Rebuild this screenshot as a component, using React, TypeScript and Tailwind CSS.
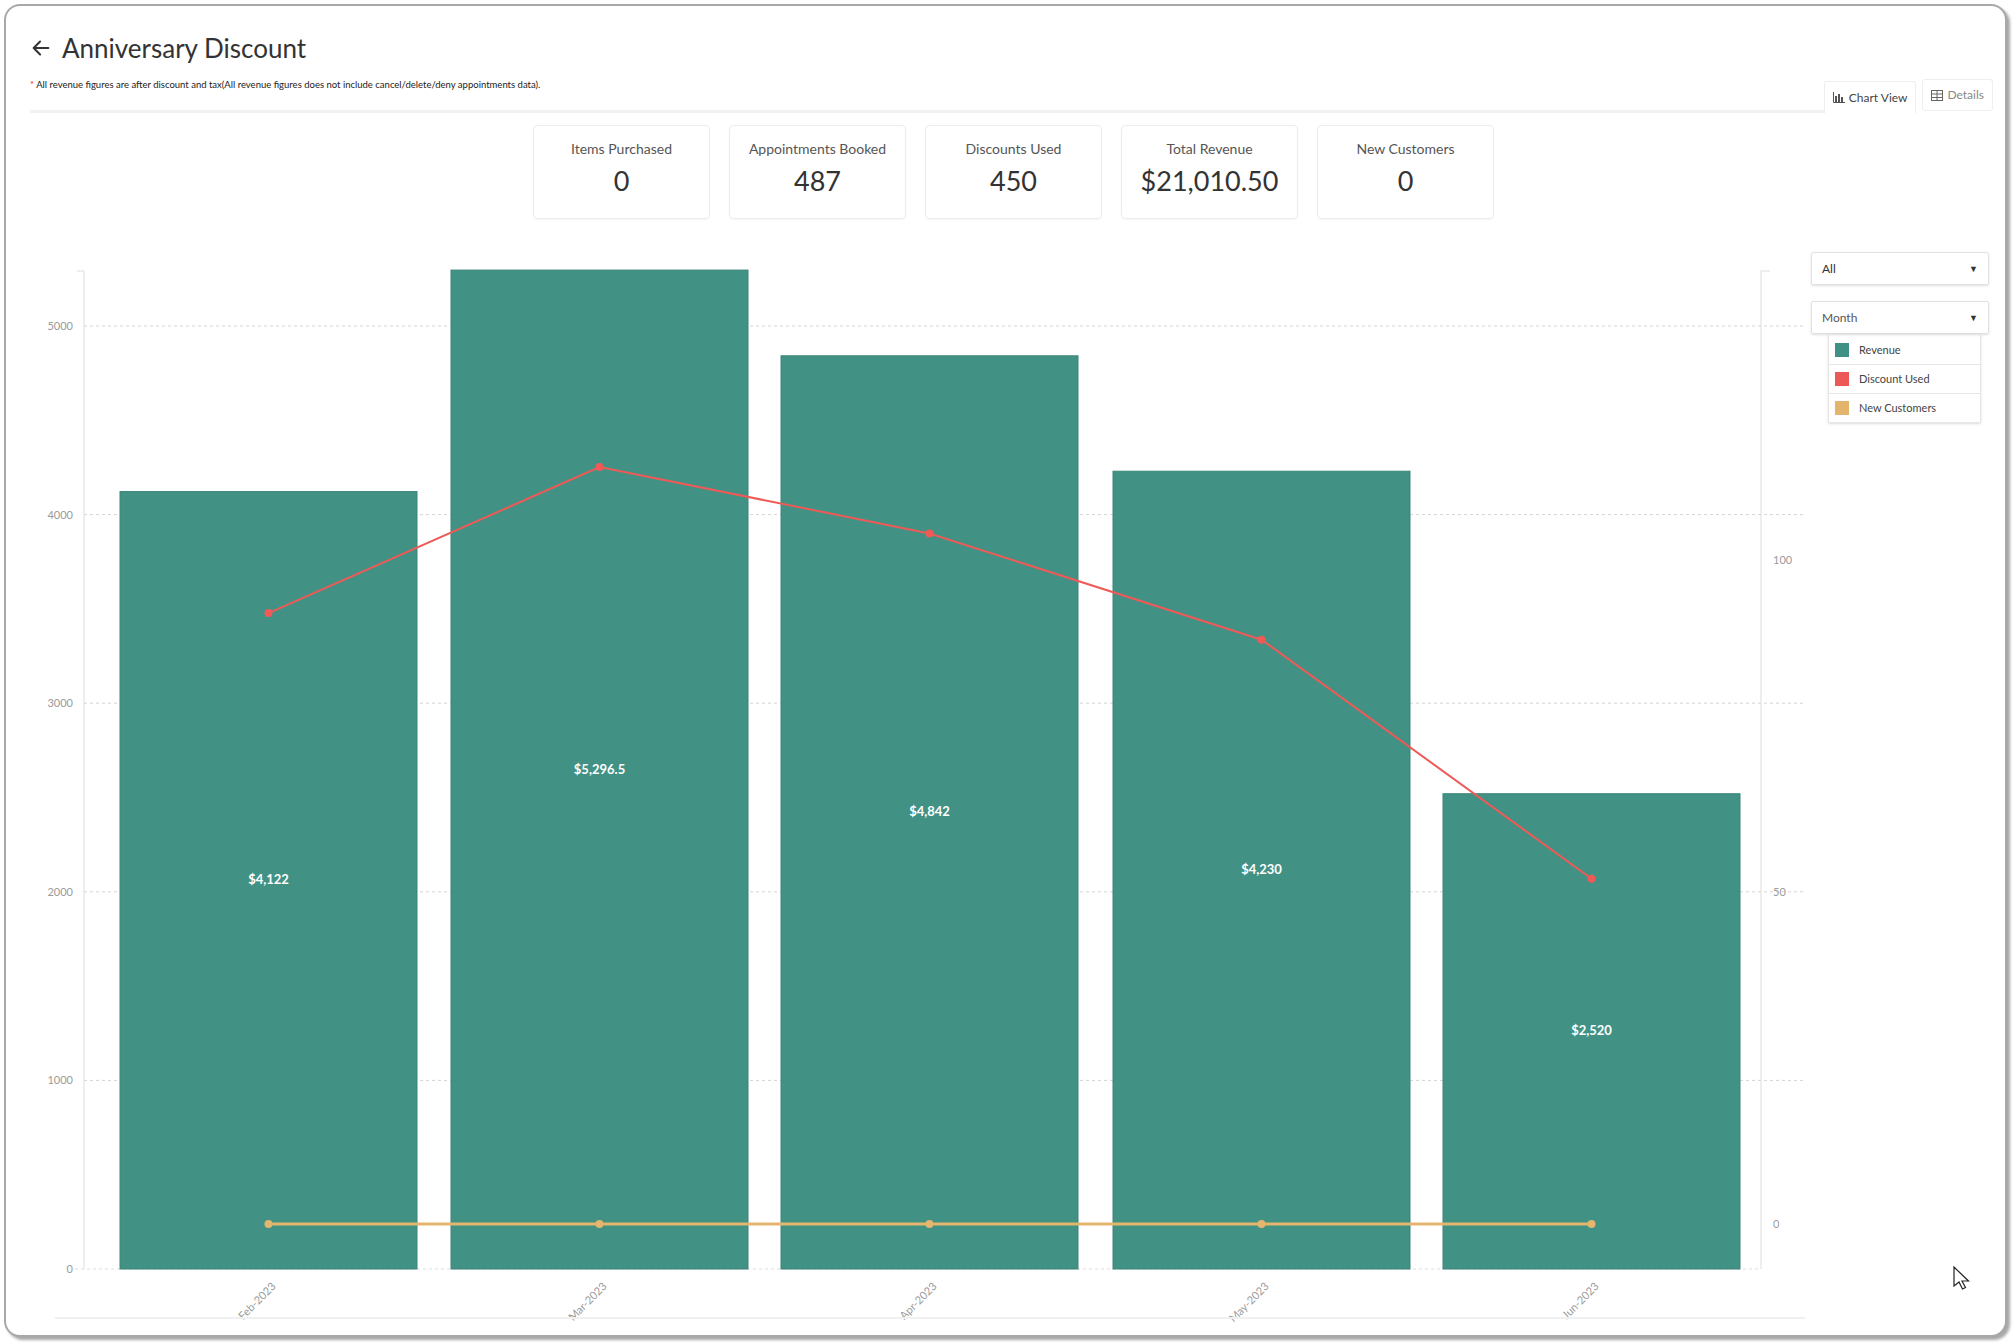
import React from "react";

const bars = [
  { m: "Feb-2023", v: 4122, label: "$4,122", x: 125, d: 92 },
  { m: "Mar-2023", v: 5296.5, label: "$5,296.5", x: 456, d: 114 },
  { m: "Apr-2023", v: 4842, label: "$4,842", x: 786, d: 104 },
  { m: "May-2023", v: 4230, label: "$4,230", x: 1118, d: 88 },
  { m: "Jun-2023", v: 2520, label: "$2,520", x: 1448, d: 52 },
];
const W = 297;
const yL = (v: number) => 1268 - (v / 1000) * 188.6;
const yR = (v: number) => 1223 - v * 6.64;

function Chart() {
  const pts = bars.map((b) => `${b.x + W / 2},${yR(b.d)}`).join(" ");
  return (
    <svg width={1805} height={1090} viewBox="5 240 1805 1090" className="block" style={{ fontFamily: "Lato, sans-serif" }}>
      {[1000, 2000, 3000, 4000, 5000].map((t) => (
        <line key={t} x1={89} x2={1808} y1={yL(t)} y2={yL(t)} stroke="#d4d4d4" strokeDasharray="3 3" />
      ))}
      {[0, 1000, 2000, 3000, 4000, 5000].map((t) => (
        <text key={t} x={78} y={yL(t) + 4} fontSize={11} fill="#9a9a9a" textAnchor="end">{t}</text>
      ))}
      {[[0, "0"], [50, "50"], [100, "100"]].map(([v, s]) => (
        <text key={s as string} x={1778} y={yR(v as number) + 4} fontSize={11} fill="#9a9a9a">{s}</text>
      ))}
      <line x1={89} x2={89} y1={270} y2={1268} stroke="#ddd" />
      <line x1={82} x2={89} y1={270} y2={270} stroke="#ddd" />
      <line x1={1766} x2={1766} y1={270} y2={1268} stroke="#ddd" />
      <line x1={1766} x2={1775} y1={270} y2={270} stroke="#ddd" />
      <line x1={80} x2={1766} y1={1268} y2={1268} stroke="#ddd" strokeDasharray="3 3" />
      {bars.map((b) => (
        <g key={b.m}>
          <rect x={b.x} y={yL(b.v)} width={W} height={1268 - yL(b.v)} fill="#419285" stroke="#3a8578" />
          <text x={b.x + W / 2} y={(yL(b.v) + 1268) / 2 + 4} fontSize={13} fontWeight={700} fill="#fff" textAnchor="middle">{b.label}</text>
          <text transform={`translate(${b.x + W / 2 + 8},${1286}) rotate(-45)`} fontSize={11} fill="#9a9a9a" textAnchor="end">{b.m}</text>
        </g>
      ))}
      <polyline points={pts} fill="none" stroke="#ef5a57" strokeWidth={2} />
      {bars.map((b) => <circle key={b.m} cx={b.x + W / 2} cy={yR(b.d)} r={4} fill="#ef5a57" />)}
      <line x1={bars[0].x + W / 2} x2={bars[4].x + W / 2} y1={yR(0)} y2={yR(0)} stroke="#e4b56c" strokeWidth={3} />
      {bars.map((b) => <circle key={b.m} cx={b.x + W / 2} cy={yR(0)} r={4} fill="#e4b56c" />)}
      <line x1={60} x2={1810} y1={1317} y2={1317} stroke="#f0f0f0" strokeWidth={2} />
    </svg>
  );
}

const cards = [
  ["Items Purchased", "0"],
  ["Appointments Booked", "487"],
  ["Discounts Used", "450"],
  ["Total Revenue", "$21,010.50"],
  ["New Customers", "0"],
];

export default function App() {
  return (
    <div className="w-[2015px] h-[1343px] bg-white p-[4px]" style={{ fontFamily: "Lato, 'Open Sans', sans-serif" }}>
      <div className="relative h-[1333px] w-[2003px] rounded-[16px] border-[2px] border-[#a8a8a8] bg-white overflow-hidden shadow-[3px_3px_3px_rgba(0,0,0,0.35)]">
        <div className="flex">
          <div className="flex-1 pl-[24px]">
            <div className="flex items-center gap-[10px] pt-[24px] h-[60px] text-[#333]">
              <svg width="22" height="22" viewBox="0 0 24 24" fill="none" stroke="#333" strokeWidth="2.2" strokeLinecap="round" strokeLinejoin="round"><path d="M20 12H4M11 5l-7 7 7 7" /></svg>
              <span className="text-[26px] leading-none">Anniversary Discount</span>
            </div>
            <div className="mt-[12px] text-[9.5px] text-[#222]"><span className="text-red-500">*</span> All revenue figures are after discount and tax(All revenue figures does not include cancel/delete/deny appointments data).</div>
            <div className="mt-[18px] mr-[0px] border-b-[3px] border-[#f2f2f2]" />
          </div>
          <div className="flex items-end gap-[6px] pr-[12px] pt-[70px] text-[12px] text-[#555]">
            <div className="flex h-[32px] items-center gap-[4px] rounded-t-[3px] border border-b-0 border-[#eee] px-[8px] text-[#444]">
              <svg width="12" height="11" viewBox="0 0 12 11"><path d="M0.5 0v10.5H12" stroke="#555" fill="none" /><rect x="2" y="4" width="2" height="6" fill="#555" /><rect x="5" y="2" width="2" height="8" fill="#555" /><rect x="8" y="5" width="2" height="5" fill="#555" /></svg>
              Chart View
            </div>
            <div className="mb-[2px] flex h-[32px] items-center gap-[4px] rounded-[3px] border border-[#eee] px-[8px] text-[#888]">
              <svg width="12" height="11" viewBox="0 0 12 11" fill="none" stroke="#666"><rect x="0.5" y="0.5" width="11" height="10" /><path d="M0.5 4h11M6 0.5v10M0.5 7.5h11" /></svg>
              Details
            </div>
          </div>
        </div>
        <div className="ml-[527px] mt-[12px] flex gap-[19px]">
          {cards.map(([l, v]) => (
            <div key={l} className="flex h-[94px] w-[177px] flex-col items-center rounded-[4px] border border-[#ececec] pt-[12px] shadow-[0_1px_2px_rgba(0,0,0,0.04)]">
              <div className="text-[14px] text-[#555]">{l}</div>
              <div className="mt-[8px] text-[27px] text-[#333] leading-none">{v}</div>
            </div>
          ))}
        </div>
        <div className="mt-[22px] flex">
          <div className="-ml-[6px]"><Chart /></div>
          <div className="ml-[6px] w-[178px] pt-[11px] text-[12px] text-[#333]">
            <div className="flex h-[33px] items-center justify-between rounded-[2px] border border-[#e2e2e2] px-[10px] shadow-sm">All<span className="text-[9px]">▼</span></div>
            <div className="mt-[16px] flex h-[33px] items-center justify-between rounded-[2px] border border-[#e2e2e2] px-[10px] text-[#555] shadow-sm">Month<span className="text-[9px] text-[#333]">▼</span></div>
            <div className="ml-[17px] mr-[8px] border border-[#e6e6e6] text-[11px] text-[#444] shadow-sm">
              {[["Revenue", "bg-[#3e9184]"], ["Discount Used", "bg-[#ec5a57]"], ["New Customers", "bg-[#e5b46c]"]].map(([n, c], i) => (
                <div key={n} className={`flex h-[29px] items-center gap-[10px] px-[6px] ${i ? "border-t border-[#e6e6e6]" : ""}`}>
                  <span className={`h-[14px] w-[14px] ${c}`} />{n}
                </div>
              ))}
            </div>
          </div>
        </div>
        <svg className="absolute left-[1946px] top-[1260px]" width="20" height="26" viewBox="0 0 20 26"><path d="M2 1v19l5-4 3.5 7 3-1.5-3.5-6.5h6.5z" fill="#fff" stroke="#222" strokeWidth="1.2" /></svg>
      </div>
    </div>
  );
}
